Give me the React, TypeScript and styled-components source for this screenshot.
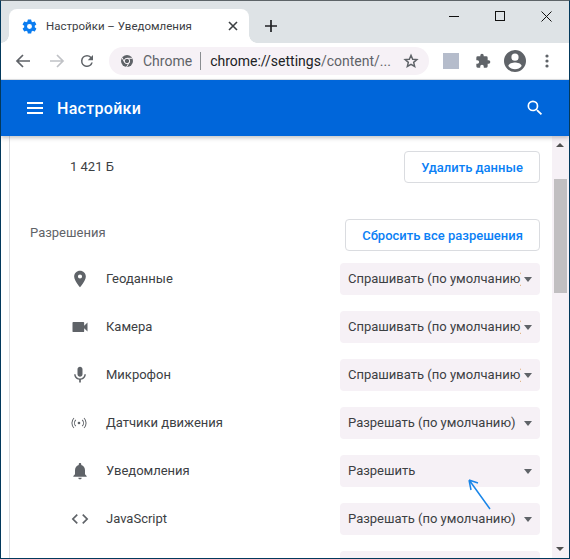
import React from "react";
import styled, { createGlobalStyle } from "styled-components";

const Global = createGlobalStyle`
  html, body { margin: 0; padding: 0; background: #fff; }
  #root { width: 570px; height: 559px; }
`;
const Win = styled.div`
  width: 570px; height: 559px; box-sizing: border-box; overflow: hidden; position: relative;
  display: flex; flex-direction: column;
  border-top: 1px solid #5d6468; border-left: 1px solid #03395c; border-right: 1px solid #03395c; border-bottom: 1px solid #03395c;
  font-family: Roboto, "Liberation Sans", sans-serif; background: #fff;
`;
const Strip = styled.div`
  height: 42px; flex: none; background: #dee3e6; display: flex; align-items: flex-end; padding-left: 8px; position: relative;
`;
const Tab = styled.div`
  width: 240px; height: 34px; box-sizing: border-box; background: #fff; border-radius: 8px 8px 0 0; position: relative;
  display: flex; align-items: center; padding-left: 12px; font-size: 11.5px; color: #3c4043;
  &::before, &::after { content: ""; position: absolute; bottom: 0; width: 8px; height: 8px; }
  &::before { left: -8px; background: radial-gradient(circle at 0 0, transparent 7.5px, #fff 8px); }
  &::after { right: -8px; background: radial-gradient(circle at 100% 0, transparent 7.5px, #fff 8px); }
`;
const TabIcon = styled.svg` display: block; flex: none; fill: #0a7cf0; `;
const TabTitle = styled.span` margin-left: 8px; width: 182px; white-space: nowrap; `;
const Plus = styled.span` margin-left: 15px; margin-bottom: 10px; display: flex; `;
const WinBtns = styled.div`
  position: absolute; right: 0; top: 0; display: flex; align-items: center; height: 30px;
`;
const WinBtn = styled.span` width: 46px; display: flex; justify-content: center; `;
const Toolbar = styled.div`
  height: 37px; flex: none; background: #fff; display: flex; align-items: center; border-bottom: 1px solid #dfe1e5; box-sizing: border-box;
`;
const NavIcon = styled.span<{ $w: number; $ml?: number }>`
  width: ${p => p.$w}px; margin-left: ${p => p.$ml ?? 0}px; display: flex; justify-content: center; align-items: center; flex: none;
`;
const Omni = styled.div`
  width: 320px; height: 28px; margin-left: 10px; background: #f6f1f6; border-radius: 14px;
  display: flex; align-items: center; padding-left: 11px; box-sizing: border-box; font-size: 14px; color: #5f6368; flex: none;
`;
const ChromeIcon = styled.svg` flex: none; margin-right: 9px; `;
const OmniSep = styled.span` width: 1px; height: 18px; background: #8a8d91; margin: 0 9px 0 8px; flex: none; `;
const Url = styled.span` width: 193px; white-space: nowrap; flex: none; `;
const Dark = styled.span` color: #202124; `;
const Star = styled.svg` flex: none; `;
const Ext = styled.span` width: 16px; height: 16px; background: #b5bccb; flex: none; margin-left: 14px; margin-right: 16px; `;
const Header = styled.div`
  height: 56px; flex: none; background: #0066da; display: flex; align-items: center; padding: 0 24px 0 26px; color: #fff;
  box-shadow: 0 2px 4px rgba(60,64,67,.3); position: relative; z-index: 1; font-size: 16px; font-weight: 500; letter-spacing: 0.3px;
`;
const HeaderTitle = styled.span` margin-left: 14px; flex: 1; `;
const Body = styled.div` flex: 1; display: flex; min-height: 0; `;
const Gutter = styled.div` width: 8px; flex: none; background: #fff; `;
const Card = styled.div`
  flex: 1; border-left: 1px solid #dadce0; overflow: hidden; box-sizing: border-box; padding: 15px 12px 0 20px; background: #fff;
`;
const Bar = styled.div` width: 17px; flex: none; background: #f6f1f6; position: relative; `;
const Thumb = styled.div` position: absolute; left: 2px; top: 43px; width: 13px; height: 114px; background: #c1bfc1; `;
const UpArrow = styled.span`
  position: absolute; top: 7px; left: 4px; width: 0; height: 0; border-left: 4.5px solid transparent; border-right: 4.5px solid transparent; border-bottom: 4.5px solid #505050;
`;
const DownArrow = styled.span`
  position: absolute; bottom: 7px; left: 4px; width: 0; height: 0; border-left: 4.5px solid transparent; border-right: 4.5px solid transparent; border-top: 4.5px solid #505050;
`;
const SizeRow = styled.div`
  height: 32px; display: flex; align-items: center; justify-content: space-between; padding-left: 40px; font-size: 13px; color: #3c4043;
`;
const SizeText = styled.span` margin-bottom: 2px; `;
const OutlineBtn = styled.div<{ $w: number }>`
  width: ${p => p.$w}px; height: 32px; box-sizing: border-box; border: 1px solid #dadce0; border-radius: 4px; background: #fff;
  display: flex; align-items: center; justify-content: center; color: #0a80f5; font-size: 13px; font-weight: 500;
`;
const SectionRow = styled.div`
  height: 32px; margin-top: 36px; display: flex; align-items: center; justify-content: space-between; font-size: 13px; color: #5f6368;
`;
const SectionTitle = styled.span` margin-bottom: 6px; `;
const PermList = styled.div` display: flex; flex-direction: column; gap: 16px; margin-top: 12px; `;
const Perm = styled.div` height: 32px; display: flex; align-items: center; font-size: 13px; color: #3c4043; `;
const PermIcon = styled.span<{ $dx?: number }>`
  width: 20px; margin-left: ${p => 40 - (p.$dx ?? 0)}px; margin-right: ${p => p.$dx ?? 0}px; margin-bottom: 1px; display: flex; justify-content: center; flex: none; color: #5f6368;
`;
const PermName = styled.span` margin-left: 16px; flex: 1; margin-bottom: 2px; `;
const Select = styled.div`
  width: 200px; height: 32px; box-sizing: border-box; background: #f6f1f6; border-radius: 4px; display: flex; align-items: center;
  padding: 0 8px 0 8px; font-size: 13px; color: #3c4043; flex: none;
`;
const SelectText = styled.span` flex: 1; overflow: hidden; white-space: nowrap; margin-bottom: 2px; `;
const Caret = styled.span`
  width: 0; height: 0; flex: none; margin-left: 3px; border-left: 4.5px solid transparent; border-right: 4.5px solid transparent; border-top: 5px solid #5f6368;
`;
const PageIcon = styled.svg` display: block; fill: currentColor; `;
const Arrow = styled.svg` position: absolute; left: 465px; top: 477px; `;

const perms = [
  { name: "Геоданные", value: "Спрашивать (по умолчанию)", size: 20, d: "M12 2C8.13 2 5 5.13 5 9c0 5.25 7 13 7 13s7-7.75 7-13c0-3.87-3.13-7-7-7zm0 9.5a2.5 2.5 0 0 1 0-5 2.5 2.5 0 0 1 0 5z" },
  { name: "Камера", value: "Спрашивать (по умолчанию)", size: 20, d: "M17 10.5V7a1 1 0 0 0-1-1H4a1 1 0 0 0-1 1v10a1 1 0 0 0 1 1h12a1 1 0 0 0 1-1v-3.5l4 4v-11l-4 4z" },
  { name: "Микрофон", value: "Спрашивать (по умолчанию)", size: 20, d: "M12 14c1.66 0 2.99-1.34 2.99-3L15 5c0-1.66-1.34-3-3-3S9 3.34 9 5v6c0 1.66 1.34 3 3 3zm5.3-3c0 3-2.54 5.1-5.3 5.1S6.7 14 6.7 11H5c0 3.41 2.72 6.23 6 6.72V21h2v-3.28c3.28-.48 6-3.3 6-6.72h-1.7z" },
  { name: "Датчики движения", value: "Разрешать (по умолчанию)", size: 16, dx: 1.5, d: "M12 10a2 2 0 1 0 0 4 2 2 0 0 0 0-4zM7.76 7.76l-1.06-1.06a7.5 7.5 0 0 0 0 10.6l1.06-1.06a6 6 0 0 1 0-8.48zm8.48 0a6 6 0 0 1 0 8.48l1.06 1.06a7.5 7.5 0 0 0 0-10.6l-1.06 1.06zM5 5 3.94 3.94a11.5 11.5 0 0 0 0 16.12L5 19a10 10 0 0 1 0-14zm14 0a10 10 0 0 1 0 14l1.06 1.06a11.5 11.5 0 0 0 0-16.12L19 5z" },
  { name: "Уведомления", value: "Разрешить", size: 20, d: "M12 22c1.1 0 2-.9 2-2h-4c0 1.1.9 2 2 2zm6-6v-5c0-3.07-1.63-5.64-4.5-6.32V4c0-.83-.67-1.5-1.5-1.5s-1.5.67-1.5 1.5v.68C7.64 5.36 6 7.92 6 11v5l-2 2v1h16v-1l-2-2z" },
  { name: "JavaScript", value: "Разрешать (по умолчанию)", size: 20, d: "M9.4 16.6 4.8 12l4.6-4.6L8 6l-6 6 6 6 1.4-1.4zm5.2 0 4.6-4.6-4.6-4.6L16 6l6 6-6 6-1.4-1.4z" },
  { name: "", value: "", size: 20, d: "" },
];

export default function App() {
  return (
    <Win>
      <Global />
      <Strip>
        <Tab>
          <TabIcon width="17" height="17" viewBox="0 0 24 24">
            <path d="M19.4 13c.04-.33.06-.66.06-1s-.02-.67-.07-1l2.1-1.65a.5.5 0 0 0 .12-.64l-2-3.46a.5.5 0 0 0-.6-.22l-2.49 1a7.3 7.3 0 0 0-1.69-.98l-.38-2.65A.49.49 0 0 0 14 2h-4a.49.49 0 0 0-.49.42l-.38 2.65c-.61.25-1.17.59-1.69.98l-2.49-1a.49.49 0 0 0-.61.22l-2 3.46a.49.49 0 0 0 .12.64L4.57 11c-.05.33-.07.66-.07 1s.02.67.07 1l-2.11 1.65a.5.5 0 0 0-.12.64l2 3.46c.12.22.39.3.61.22l2.49-1c.52.4 1.08.73 1.69.98l.38 2.65c.03.24.24.42.49.42h4c.25 0 .46-.18.49-.42l.38-2.65c.61-.25 1.17-.59 1.69-.98l2.49 1c.22.08.49 0 .61-.22l2-3.46a.5.5 0 0 0-.12-.64L19.4 13zM12 15.5a3.5 3.5 0 1 1 0-7 3.5 3.5 0 0 1 0 7z" />
          </TabIcon>
          <TabTitle>Настройки – Уведомления</TabTitle>
          <svg width="10" height="10" viewBox="0 0 10 10"><path d="M1 1l8 8M9 1l-8 8" stroke="#3c4043" strokeWidth="1.6" /></svg>
        </Tab>
        <Plus>
          <svg width="14" height="14" viewBox="0 0 14 14"><path d="M7 1v12M1 7h12" stroke="#202124" strokeWidth="1.7" /></svg>
        </Plus>
        <WinBtns>
          <WinBtn><svg width="11" height="11" viewBox="0 0 11 11"><path d="M0 5.5h10" stroke="#111" strokeWidth="1" /></svg></WinBtn>
          <WinBtn><svg width="11" height="11" viewBox="0 0 11 11"><rect x=".5" y=".5" width="9" height="9" fill="none" stroke="#111" /></svg></WinBtn>
          <WinBtn><svg width="11" height="11" viewBox="0 0 11 11"><path d="M.5.5l10 10M10.5.5l-10 10" stroke="#111" strokeWidth="1" /></svg></WinBtn>
        </WinBtns>
      </Strip>
      <Toolbar>
        <NavIcon $w={32} $ml={6}>
          <svg width="16" height="16" viewBox="0 0 16 16"><path d="M15 8H2M8 2 2 8l6 6" fill="none" stroke="#5f6368" strokeWidth="1.7" /></svg>
        </NavIcon>
        <NavIcon $w={36}>
          <svg width="16" height="16" viewBox="0 0 16 16"><path d="M1 8h13M8 2l6 6-6 6" fill="none" stroke="#c0c2c6" strokeWidth="1.7" /></svg>
        </NavIcon>
        <NavIcon $w={24}>
          <svg width="18" height="18" viewBox="0 0 24 24"><path fill="#5f6368" d="M17.65 6.35A7.96 7.96 0 0 0 12 4a8 8 0 1 0 7.73 10h-2.08A6 6 0 1 1 12 6c1.66 0 3.14.69 4.22 1.78L13 11h7V4l-2.35 2.35z" /></svg>
        </NavIcon>
        <Omni>
          <ChromeIcon width="14" height="14" viewBox="0 0 14 14">
            <circle cx="7" cy="7" r="6" fill="#5f6368" />
            <circle cx="7" cy="7" r="2.7" fill="#5f6368" stroke="#f6f1f6" strokeWidth="1" />
            <path d="M7 4.3h5.4M4.7 8.4 2 3.6M9.3 8.4 6.5 13" stroke="#f6f1f6" strokeWidth="1" fill="none" />
          </ChromeIcon>
          <span>Chrome</span>
          <OmniSep />
          <Url><Dark>chrome://settings</Dark>/content/...</Url>
          <Star width="16" height="16" viewBox="0 0 24 24"><path fill="none" stroke="#5f6368" strokeWidth="2.2" d="M12 3.5l2.5 5.8 6.3.6-4.8 4.1 1.5 6.2L12 16.9l-5.5 3.3L8 14 3.2 9.9l6.3-.6z" /></Star>
        </Omni>
        <Ext />
        <NavIcon $w={16}>
          <svg width="18" height="18" viewBox="0 0 24 24"><path fill="#5f6368" d="M20.5 11H19V7a2 2 0 0 0-2-2h-4V3.500a2.500 2.500 0 0 0-5 0V5H4a2 2 0 0 0-2 2v3.800h1.500a2.700 2.700 0 0 1 0 5.400H2V20a2 2 0 0 0 2 2h3.800v-1.500a2.700 2.700 0 0 1 5.400 0V22H17a2 2 0 0 0 2-2v-4h1.500a2.500 2.500 0 0 0 0-5z" /></svg>
        </NavIcon>
        <NavIcon $w={24} $ml={12}>
          <svg width="24" height="24" viewBox="0 0 24 24"><path fill="#5f6368" d="M12 1a11 11 0 1 0 0 22 11 11 0 0 0 0-22zm0 3.600a3.600 3.600 0 1 1 0 7.200 3.600 3.600 0 0 1 0-7.200zm0 15.600a8.400 8.400 0 0 1-6.600-3.300c.1-2.200 4.400-3.400 6.600-3.400s6.500 1.200 6.600 3.400a8.400 8.400 0 0 1-6.600 3.300z" /></svg>
        </NavIcon>
        <NavIcon $w={16} $ml={12}>
          <svg width="4" height="14" viewBox="0 0 4 14"><circle cx="2" cy="2" r="1.6" fill="#5f6368" /><circle cx="2" cy="7" r="1.6" fill="#5f6368" /><circle cx="2" cy="12" r="1.6" fill="#5f6368" /></svg>
        </NavIcon>
      </Toolbar>
      <Header>
        <svg width="16" height="12" viewBox="0 0 16 12"><path d="M0 1h16M0 6h16M0 11h16" stroke="#fff" strokeWidth="2" /></svg>
        <HeaderTitle>Настройки</HeaderTitle>
        <svg width="20" height="20" viewBox="0 0 24 24"><path fill="#fff" d="M15.5 14h-.79l-.28-.27A6.47 6.47 0 0 0 16 9.5 6.5 6.5 0 1 0 9.5 16c1.61 0 3.09-.59 4.23-1.57l.27.28v.79l5 4.99L20.49 19l-4.99-5zm-6 0a4.5 4.5 0 1 1 0-9 4.5 4.5 0 0 1 0 9z" /></svg>
      </Header>
      <Body>
        <Gutter />
        <Card>
          <SizeRow>
            <SizeText>1 421 Б</SizeText>
            <OutlineBtn $w={136}>Удалить данные</OutlineBtn>
          </SizeRow>
          <SectionRow>
            <SectionTitle>Разрешения</SectionTitle>
            <OutlineBtn $w={195}>Сбросить все разрешения</OutlineBtn>
          </SectionRow>
          <PermList>
            {perms.map((p, i) => (
              <Perm key={i}>
                <PermIcon $dx={p.dx}>
                  {p.d && <PageIcon width={p.size} height={p.size} viewBox="0 0 24 24"><path d={p.d} /></PageIcon>}
                </PermIcon>
                <PermName>{p.name}</PermName>
                <Select>
                  <SelectText>{p.value}</SelectText>
                  <Caret />
                </Select>
              </Perm>
            ))}
          </PermList>
        </Card>
        <Bar>
          <UpArrow />
          <Thumb />
          <DownArrow />
        </Bar>
      </Body>
      <Arrow width="32" height="36" viewBox="0 0 32 36">
        <path d="M24 31 3.5 2.5M3 2l9 3M3 2l2 10" fill="none" stroke="#1a86e8" strokeWidth="1.5" />
      </Arrow>
    </Win>
  );
}
